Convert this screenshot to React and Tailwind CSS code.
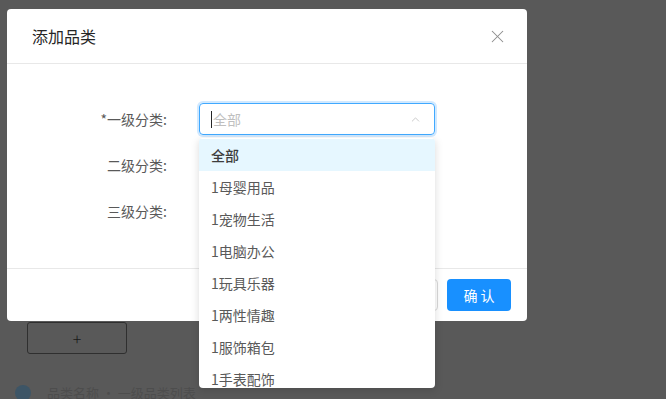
import React from "react";
import { X, ChevronUp } from "lucide-react";

const FONT = { fontFamily: '"Noto Sans CJK SC", "Noto Sans", sans-serif' };

const options = [
  "全部",
  "1母婴用品",
  "1宠物生活",
  "1电脑办公",
  "1玩具乐器",
  "1两性情趣",
  "1服饰箱包",
  "1手表配饰",
];

const FormRow = ({ label, children }) => (
  <div className="flex items-center h-[32px]">
    <div className="w-[160px] text-right text-[14px] text-[#595959]">{label}</div>
    <div className="ml-[32px]">{children}</div>
  </div>
);

const App = () => {
  return (
    <div className="relative w-[666px] h-[399px] overflow-hidden bg-[#595959]" style={FONT}>
      {/* page behind the mask */}
      <div className="pt-[322px] pl-[27px]">
        <div className="w-[100px] h-[32px] rounded-[3px] border border-[#2f2f2f] flex items-center justify-center text-[16px] font-light text-[#1a1a1a]">
          +
        </div>
        <div className="mt-[31px] -ml-[12px] flex items-center gap-[16px]">
          <div className="w-[16px] h-[16px] rounded-full bg-[#3d5566]" />
          <span className="text-[13px] leading-[16px] text-[#4d4d4d]">品类名称 · 一级品类列表</span>
        </div>
      </div>

      {/* modal */}
      <div className="absolute left-[7px] top-[9px] w-[520px] h-[312px] bg-white rounded-[4px] flex flex-col">
        <div className="h-[55px] px-[25px] flex items-center justify-between border-b border-[#e8e8e8]">
          <span className="text-[16px] text-[#262626]">添加品类</span>
          <X size={21} strokeWidth={1.2} className="text-[#8c8c8c] -mr-[6px]" />
        </div>

        <div className="flex-1 pt-[39px] flex flex-col gap-[14px]">
          <FormRow label="*一级分类:">
            <div className="w-[236px] h-[32px] rounded-[4px] border border-[#40a9ff] shadow-[0_0_0_2px_rgba(24,144,255,0.2)] flex items-center pl-[11px] pr-[12px]">
              <div className="w-px h-[17px] bg-[#262626]" />
              <span className="ml-px text-[14px] text-[#bfbfbf] flex-1">全部</span>
              <ChevronUp size={13} strokeWidth={1.5} className="text-[#bfbfbf]" />
            </div>
          </FormRow>
          <FormRow label="二级分类:" />
          <FormRow label="三级分类:" />
        </div>

        <div className="h-[53px] border-t border-[#e8e8e8] flex items-start justify-end gap-[9px] pt-[10px] pr-[16px]">
          <button className="w-[64px] h-[32px] rounded-[4px] border border-[#d9d9d9] text-[14px] text-[#595959] bg-white">
            取 消
          </button>
          <button className="w-[64px] h-[32px] rounded-[4px] bg-[#1890ff] text-[14px] text-white">
            确 认
          </button>
        </div>
      </div>

      {/* open select dropdown */}
      <div className="absolute left-[199px] top-[138px] w-[236px] h-[250px] bg-white rounded-[4px] shadow-[0_2px_8px_rgba(0,0,0,0.15)] overflow-hidden pt-px">
        {options.map((o, i) => (
          <div
            key={o}
            className={
              i === 0
                ? "h-[32px] flex items-center pl-[12px] text-[14px] font-medium text-[#3d3d3d] bg-[#e6f7ff]"
                : "h-[32px] flex items-center pl-[12px] text-[14px] text-[#595959]"
            }
          >
            {o}
          </div>
        ))}
      </div>
    </div>
  );
};

export default App;
